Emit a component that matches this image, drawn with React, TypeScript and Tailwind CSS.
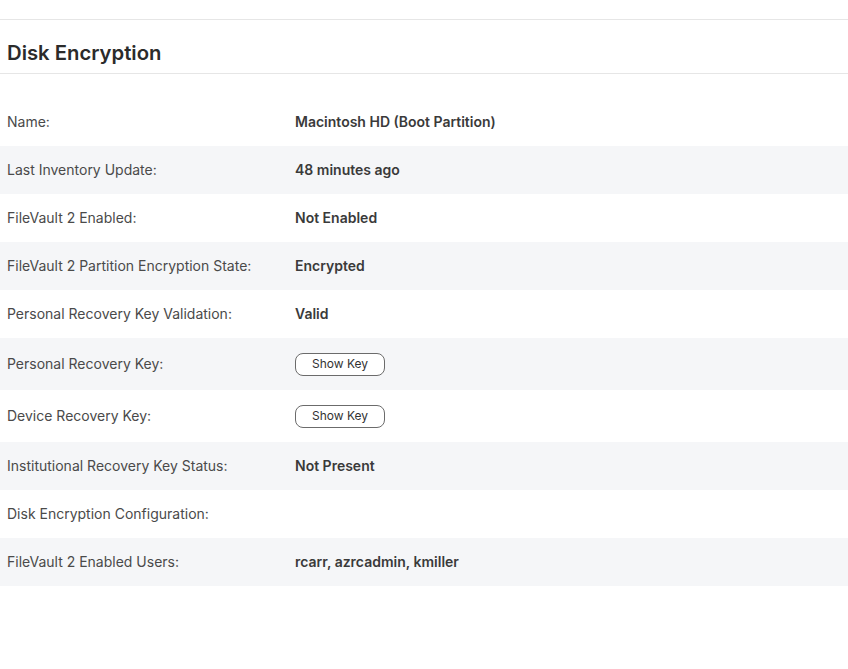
const rows: { label: string; value?: string; button?: boolean }[] = [
  { label: 'Name:', value: 'Macintosh HD (Boot Partition)' },
  { label: 'Last Inventory Update:', value: '48 minutes ago' },
  { label: 'FileVault 2 Enabled:', value: 'Not Enabled' },
  { label: 'FileVault 2 Partition Encryption State:', value: 'Encrypted' },
  { label: 'Personal Recovery Key Validation:', value: 'Valid' },
  { label: 'Personal Recovery Key:', button: true },
  { label: 'Device Recovery Key:', button: true },
  { label: 'Institutional Recovery Key Status:', value: 'Not Present' },
  { label: 'Disk Encryption Configuration:' },
  { label: 'FileVault 2 Enabled Users:', value: 'rcarr, azrcadmin, kmiller' },
]

export default function App() {
  return (
    <div className="min-h-screen bg-white font-['Inter','Liberation_Sans',sans-serif] text-[#333]">
      <div className="h-[19px]" />
      <div className="border-y border-[#e6e6e6] h-[55px] flex items-center px-[7px]">
        <h2 className="text-[20.3px] font-semibold text-[#2b2b2b] pt-[13px]">Disk Encryption</h2>
      </div>

      {/* Details */}
      <div className="pt-[24px]">
        {rows.map((row, i) => (
          <div
            key={row.label}
            className={`flex items-center px-[7px] text-[14px] pb-[2px] ${row.button ? 'h-[52px]' : 'h-[48px]'} ${
              i % 2 === 1 ? 'bg-[#f5f6f8]' : 'bg-white'
            }`}
          >
            <div className="w-[288px] shrink-0 text-[#4a4a4a]">{row.label}</div>
            {row.button ? (
              <button className="w-[90px] h-[23px] rounded-[8px] border border-[#6b6b6b] bg-white text-[12px] text-[#333] mt-[2px]">
                Show Key
              </button>
            ) : (
              <div className="font-semibold text-[#3a3a3a]">{row.value}</div>
            )}
          </div>
        ))}
      </div>
    </div>
  )
}
